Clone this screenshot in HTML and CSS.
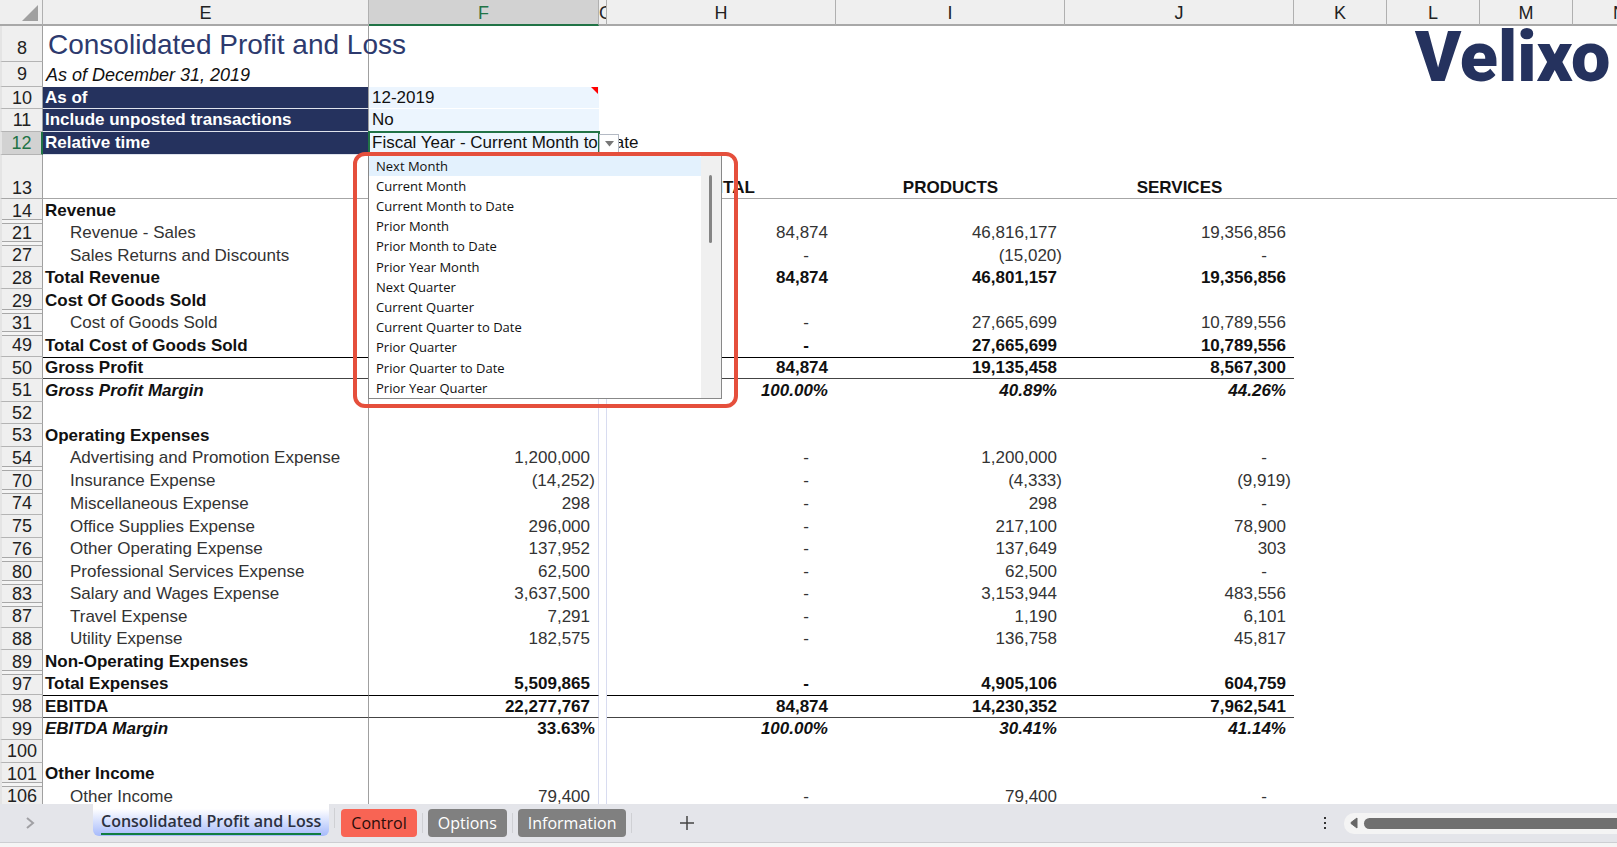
FILE: index.html
```html
<!DOCTYPE html>
<html lang="en">
<head>
<meta charset="utf-8">
<title>Consolidated Profit and Loss</title>
<link rel="stylesheet" href="styles.css">
</head>
<body>
<main class="sheet">
<table class="grid">
<colgroup><col class="c-head"><col class="c-label"><col class="c-total"><col class="c-gap"><col class="c-num"><col class="c-num"><col class="c-num"><col class="c-std"><col class="c-std"><col class="c-std"><col></colgroup>
<thead>
<tr><th class="corner"><svg width="16" height="16" viewBox="0 0 16 16" aria-hidden="true"><path d="M16 0v16H0z" fill="#a0a0a0"/></svg></th><th>E</th><th class="on">F</th><th class="thin">G</th><th>H</th><th>I</th><th>J</th><th>K</th><th>L</th><th>M</th><th class="last">N</th></tr>
</thead>
<tbody class="top">
<tr class="r-title"><th>8</th><td class="e title">Consolidated Profit and Loss</td><td></td><td></td><td></td><td></td><td></td><td></td><td class="anchor"><span class="logo">Velixo</span></td><td></td><td></td></tr>
<tr class="r-sub"><th>9</th><td class="e sub">As of December 31, 2019</td><td colspan="9"></td></tr>
<tr class="r-param"><th>10</th><td class="e param">As of</td><td class="input note">12-2019</td><td colspan="8"></td></tr>
<tr class="r-param"><th>11</th><td class="e param">Include unposted transactions</td><td class="input">No</td><td colspan="8"></td></tr>
<tr class="r-param"><th class="on">12</th><td class="e param">Relative time</td>
<td class="input active"><label for="period">Fiscal Year - Current Month to Date</label><button class="drop" aria-label="Open list"><svg width="9" height="6" viewBox="0 0 9 6"><path d="M0 0h9L4.500 5.500z" fill="#777"/></svg></button>
<div class="callout"><div class="list">
<select id="period" size="12">
<option class="hover">Next Month</option><option>Current Month</option><option>Current Month to Date</option><option>Prior Month</option><option>Prior Month to Date</option><option>Prior Year Month</option><option>Next Quarter</option><option>Current Quarter</option><option>Current Quarter to Date</option><option>Prior Quarter</option><option>Prior Quarter to Date</option><option>Prior Year Quarter</option>
</select><div class="track"><div class="thumb"></div></div></div></div></td><td colspan="8"></td></tr>
<tr class="r-heads"><th>13</th><td class="e"></td><td></td><td></td><td>DIGITAL</td><td>PRODUCTS</td><td>SERVICES</td><td colspan="4"></td></tr>
</tbody>
<tbody class="body">
<tr class="b"><th class="cut">14</th><td class="e">Revenue</td><td></td><td></td><td></td><td></td><td></td></tr>
<tr><th class="cut after">21</th><td class="e in">Revenue - Sales</td><td></td><td></td><td>84,874</td><td>46,816,177</td><td>19,356,856</td></tr>
<tr><th class="after">27</th><td class="e in">Sales Returns and Discounts</td><td></td><td></td><td class="nil">-</td><td class="neg">(15,020)</td><td class="nil">-</td></tr>
<tr class="b"><th>28</th><td class="e">Total Revenue</td><td></td><td></td><td>84,874</td><td>46,801,157</td><td>19,356,856</td></tr>
<tr class="b"><th class="cut">29</th><td class="e">Cost Of Goods Sold</td><td></td><td></td><td></td><td></td><td></td></tr>
<tr><th class="cut after">31</th><td class="e in">Cost of Goods Sold</td><td></td><td></td><td class="nil">-</td><td>27,665,699</td><td>10,789,556</td></tr>
<tr class="b"><th class="after">49</th><td class="e">Total Cost of Goods Sold</td><td></td><td></td><td class="nil">-</td><td>27,665,699</td><td>10,789,556</td></tr>
<tr class="b total"><th>50</th><td class="e">Gross Profit</td><td></td><td></td><td>84,874</td><td>19,135,458</td><td>8,567,300</td></tr>
<tr class="b i"><th>51</th><td class="e">Gross Profit Margin</td><td></td><td></td><td>100.00%</td><td>40.89%</td><td>44.26%</td></tr>
<tr><th>52</th><td class="e"></td><td></td><td></td><td></td><td></td><td></td></tr>
<tr class="b"><th>53</th><td class="e">Operating Expenses</td><td></td><td></td><td></td><td></td><td></td></tr>
<tr><th class="cut">54</th><td class="e in">Advertising and Promotion Expense</td><td>1,200,000</td><td></td><td class="nil">-</td><td>1,200,000</td><td class="nil">-</td></tr>
<tr><th class="cut after">70</th><td class="e in">Insurance Expense</td><td class="neg">(14,252)</td><td></td><td class="nil">-</td><td class="neg">(4,333)</td><td class="neg">(9,919)</td></tr>
<tr class="tall"><th class="after">74</th><td class="e in">Miscellaneous Expense</td><td>298</td><td></td><td class="nil">-</td><td>298</td><td class="nil">-</td></tr>
<tr><th>75</th><td class="e in">Office Supplies Expense</td><td>296,000</td><td></td><td class="nil">-</td><td>217,100</td><td>78,900</td></tr>
<tr><th class="cut">76</th><td class="e in">Other Operating Expense</td><td>137,952</td><td></td><td class="nil">-</td><td>137,649</td><td>303</td></tr>
<tr><th class="cut after">80</th><td class="e in">Professional Services Expense</td><td>62,500</td><td></td><td class="nil">-</td><td>62,500</td><td class="nil">-</td></tr>
<tr><th class="cut after">83</th><td class="e in">Salary and Wages Expense</td><td>3,637,500</td><td></td><td class="nil">-</td><td>3,153,944</td><td>483,556</td></tr>
<tr><th class="after">87</th><td class="e in">Travel Expense</td><td>7,291</td><td></td><td class="nil">-</td><td>1,190</td><td>6,101</td></tr>
<tr><th>88</th><td class="e in">Utility Expense</td><td>182,575</td><td></td><td class="nil">-</td><td>136,758</td><td>45,817</td></tr>
<tr class="b"><th class="cut">89</th><td class="e">Non-Operating Expenses</td><td></td><td></td><td></td><td></td><td></td></tr>
<tr class="b"><th class="after">97</th><td class="e">Total Expenses</td><td>5,509,865</td><td></td><td class="nil">-</td><td>4,905,106</td><td>604,759</td></tr>
<tr class="b total"><th>98</th><td class="e">EBITDA</td><td>22,277,767</td><td></td><td>84,874</td><td>14,230,352</td><td>7,962,541</td></tr>
<tr class="b i"><th>99</th><td class="e">EBITDA Margin</td><td class="neg up">33.63%</td><td></td><td>100.00%</td><td>30.41%</td><td>41.14%</td></tr>
<tr><th>100</th><td class="e"></td><td></td><td></td><td></td><td></td><td></td></tr>
<tr class="b"><th class="cut">101</th><td class="e">Other Income</td><td></td><td></td><td></td><td></td><td></td></tr>
<tr><th class="after">106</th><td class="e in">Other Income</td><td>79,400</td><td></td><td class="nil">-</td><td>79,400</td><td class="nil">-</td></tr>
</tbody>
</table>
</main>
<footer class="tabs">
<button class="icon next" aria-label="Next sheet"><svg width="10" height="12" viewBox="0 0 10 12"><path d="M2 1l6 5-6 5" fill="none" stroke="#a0a0a4" stroke-width="2"/></svg></button>
<button class="tab current"><span>Consolidated Profit and Loss</span></button>
<button class="tab red">Control</button>
<button class="tab">Options</button>
<button class="tab">Information</button>
<button class="icon add" aria-label="New sheet"><svg width="14" height="14" viewBox="0 0 14 14"><path d="M7 0v14M0 7h14" stroke="#444" stroke-width="1.500"/></svg></button>
<button class="icon more" aria-label="Resize tabs"><svg width="4" height="14" viewBox="0 0 4 14"><path d="M1 1h2v2H1zM1 6h2v2H1zM1 11h2v2H1z" fill="#333"/></svg></button>
<div class="hscroll"><svg width="8" height="12" viewBox="0 0 8 12"><path d="M7 1v10L1 6.500v-1z" fill="#666" stroke="#666" stroke-linejoin="round"/></svg><div class="hthumb"></div></div>
</footer>
<div class="edge"></div>
</body>
</html>
```
FILE: styles.css
```css
* { box-sizing: border-box; }
body {
  margin: 0;
  height: 100vh;
  display: flex;
  flex-direction: column;
  overflow: hidden;
  background: #fff;
  color: #111;
  font-family: "Liberation Sans", Arial, sans-serif;
  font-size: 17px;
}
button { border: 0; padding: 0; background: none; font: inherit; color: inherit; }

/* Sheet */
.sheet { flex: 1; min-height: 0; overflow: hidden; }
.grid { width: 100%; table-layout: fixed; border-collapse: separate; border-spacing: 0; }
.c-head { width: 43px; }
.c-label { width: 326px; }
.c-total { width: 230px; }
.c-num { width: 229px; }
.c-gap { width: 8px; }
.c-std { width: 93px; }
.grid th, .grid td { padding: 0; white-space: nowrap; line-height: 20px; }
.grid th { font-size: 18px; font-weight: 400; color: #222; background: #efefef; }

.grid thead th { height: 26px; padding-top: 1px; border-right: 1px solid #b0b0b0; border-bottom: 2px solid #a8a8a8; }
.grid thead .corner { text-align: right; padding-right: 4px; }
.corner svg { display: block; margin-left: auto; }
.grid thead .on { background: #d2d2d2; color: #217346; border-bottom-color: #217346; }
.grid thead .thin { overflow: hidden; text-align: left; }
.grid thead .last { padding-left: 40px; text-align: left; border-right: 0; }

tbody th {
  border-left: 2px solid #e4e4e4;
  border-right: 1px solid #a0a0a0;
  border-bottom: 1px solid #b4b4b4;
}
.grid tbody th.on { background: #d2d2d2; color: #217346; border-right: 2px solid #217346; }
.e { border-right: 1px solid #a0a0a0; }

.top td { text-align: left; }
.r-title { height: 36px; }
.r-sub { height: 25px; }
.r-param { height: 23px; }
.r-param:nth-child(3) { height: 22px; }
.r-heads { height: 44px; }
.r-title th, .r-heads th { vertical-align: bottom; }
.grid .r-title th { padding-bottom: 3px; }
.grid .title { padding: 2px 0 0 5px; font-size: 28px; line-height: 32px; color: #2d3a6e; }
.grid .sub { padding-left: 3px; font-size: 18px; font-style: italic; }
.grid .param { padding-left: 2px; background: #25325e; color: #fff; font-weight: 700; border-bottom: 1px solid #dfe3ec; }
.grid .input { position: relative; padding-left: 3px; background: #ecf5fe; border-bottom: 1px solid #fff; }
.note::after {
  content: "";
  position: absolute;
  top: 0;
  right: 1px;
  border-top: 7px solid #f00;
  border-left: 7px solid transparent;
}
.grid .active { outline: 2px solid #217346; outline-offset: -1px; }
.drop {
  position: absolute;
  top: 2px;
  left: 100%;
  width: 20px;
  height: 20px;
  display: flex;
  align-items: center;
  justify-content: center;
  background: #fff;
  border: 1px solid #b4bac4;
}
.anchor { position: relative; }
.logo {
  position: absolute;
  top: 0;
  left: 28px;
  color: #25325e;
  font-family: Roboto, sans-serif;
  font-size: 70px;
  font-weight: 900;
  line-height: 62px;
}

/* Validation list */
.callout {
  position: absolute;
  z-index: 2;
  top: 20px;
  left: -16px;
  padding: 0 12px 5px 11px;
  border: 4px solid #e54f3c;
  border-radius: 12px;
}
.list { display: flex; width: 354px; background: #fff; border: 1px solid #888; border-top: 0; }
.list select {
  flex: 1;
  min-width: 0;
  height: 242px;
  padding: 0;
  border: 0;
  outline: 0;
  overflow: hidden;
  scrollbar-width: none;
  background: #fff;
  color: #111;
  font-family: "Open Sans", "Noto Sans", sans-serif;
  font-size: 13px;
}
.list option { height: 20px; min-height: 20px; padding: 1px 7px 0; line-height: 20px; }
.list option:nth-child(5n) { height: 21px; }
.list .hover { background: #e3f1fd; }
.track { width: 20px; background: #f0f0f0; }
.thumb { width: 3px; height: 68px; margin: 19px 0 0 8px; background: #858585; border-radius: 2px; }

/* Report rows */
.grid .r-heads th, .grid .r-heads td { vertical-align: bottom; border-bottom: 1px solid #a6a6a6; }
.r-heads td { font-weight: 700; }
.grid .r-heads td { text-align: center; }
.body tr { height: 23px; }
.body tr:nth-child(even) { height: 22px; }
.body tr.tall { height: 23px; }
.body td { text-align: right; }
.grid .body td { padding-right: 8px; }
.grid .body td.neg { padding-right: 3px; }
.grid .body td.nil { padding-right: 27px; }
.grid .body td.e { padding: 0 0 0 2px; text-align: left; }
.grid .body td.e.in { padding-left: 27px; }
.body td:nth-child(3) { border-right: 1px solid #d8dcf0; }
.body td:nth-child(4) { border-right: 1px solid #d8dcf0; }
.body tr:not(.b) td { color: #333; }
.b td { font-weight: 700; }
.i td { font-style: italic; }
.i td.up { font-style: normal; }
.total td:not(:nth-child(4)) { border-top: 1px solid #000; border-bottom: 1px solid #444; }
.body .cut { border-bottom: 0; box-shadow: inset 0 -2px #f4f4f4, inset 0 -3px #a8a8a8; }
.body .after { box-shadow: inset 0 1px #f4f4f4, inset 0 2px #a8a8a8; }
.body .cut.after { box-shadow: inset 0 1px #f4f4f4, inset 0 2px #a8a8a8, inset 0 -2px #f4f4f4, inset 0 -3px #a8a8a8; }

/* Sheet tabs */
.tabs {
  display: flex;
  align-items: center;
  height: 38px;
  background: #e4e5ea;
  font-family: "Open Sans", "Noto Sans", sans-serif;
  font-size: 16px;
}
.icon { display: flex; align-items: center; justify-content: center; height: 28px; }
.next { width: 60px; }
.tab {
  position: relative;
  height: 28px;
  margin-right: 11px;
  padding: 0 10px;
  line-height: 28px;
  border-radius: 4px;
  background: #808080;
  color: #fff;
}
.tab::after {
  content: "";
  position: absolute;
  top: 4px;
  right: -6px;
  width: 1px;
  height: 20px;
  background: #cfd0d4;
}
.tab.red { background: #f86454; color: #2a0d0a; }
.tab.current {
  align-self: flex-start;
  height: 32px;
  margin-left: 33px;
  margin-right: 12px;
  padding: 0 8px;
  border-radius: 0 0 6px 6px;
  background: linear-gradient(#fff 15%, #a6bafb);
  color: #2c3140;
  font-weight: 600;
}
.current span { display: block; height: 29px; line-height: 30px; border-bottom: 2px solid #107c41; }
.add { margin-left: 38px; width: 24px; }
.more { margin-left: auto; width: 20px; }
.hscroll {
  display: flex;
  align-items: center;
  gap: 6px;
  width: 273px;
  height: 21px;
  margin-left: 9px;
  padding-left: 6px;
  border-radius: 10px 0 0 10px;
  background: #f4f4f4;
}
.hthumb { flex: 1; height: 11px; border-radius: 6px 0 0 6px; background: #707070; }
.edge { height: 5px; border-top: 1px solid #cdced2; background: #f5f5f5; }
```
